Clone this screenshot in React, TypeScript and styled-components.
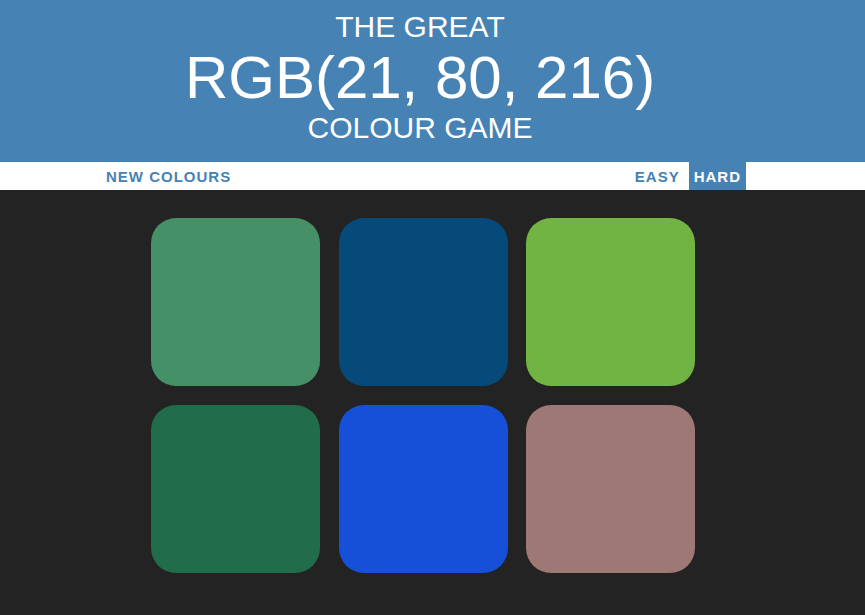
import React from "react";
import styled, { createGlobalStyle } from "styled-components";

const Global = createGlobalStyle`
  html, body { margin: 0; padding: 0; background: #232323; }
  body { font-family: "Liberation Sans", Arial, sans-serif; }
  * { box-sizing: border-box; }
`;

const Page = styled.div`
  min-height: 100vh;
  background: #232323;
`;

const Header = styled.header`
  background: #4682b4;
  color: #fff;
  text-align: center;
  padding: 10px 25px 17px 0;
  font-weight: 400;
  text-transform: uppercase;
`;

const Line = styled.div<{ $size: number; $lh: number }>`
  font-size: ${(p) => p.$size}px;
  line-height: ${(p) => p.$lh}px;
`;

const Stripe = styled.nav`
  background: #fff;
  height: 28px;
  padding-right: 13px;
`;

const StripeInner = styled.div`
  width: 640px;
  height: 100%;
  margin: 0 auto;
  display: flex;
  justify-content: space-between;
  align-items: stretch;
`;

const Group = styled.div`
  display: flex;
  gap: 4px;
`;

const Btn = styled.button<{ $selected?: boolean; $pad?: boolean }>`
  border: none;
  background: ${(p) => (p.$selected ? "#4682b4" : "none")};
  color: ${(p) => (p.$selected ? "#fff" : "#4682b4")};
  font-family: "Liberation Sans", Arial, sans-serif;
  font-weight: 700;
  font-size: 15px;
  letter-spacing: 1px;
  text-transform: uppercase;
  height: 100%;
  padding: ${(p) => (p.$pad ? "0 5px" : "0")};
  cursor: pointer;
  outline: none;
`;

const Board = styled.main`
  padding: 28px 19px 0 0;
  display: flex;
  justify-content: center;
`;

const Grid = styled.div`
  display: grid;
  grid-template-columns: repeat(3, 169px);
  grid-auto-rows: 168px;
  column-gap: 18.5px;
  row-gap: 19px;
`;

const Square = styled.div<{ $color: string }>`
  background: ${(p) => p.$color};
  border-radius: 25px;
`;

const colors = [
  "#459066",
  "#064a7a",
  "#72b443",
  "#216c4b",
  "#1750d8",
  "#9e7875",
];

export default function App() {
  return (
    <Page>
      <Global />
      <Header>
        <Line $size={30} $lh={34}>The Great</Line>
        <Line $size={60} $lh={67}>RGB(21, 80, 216)</Line>
        <Line $size={30} $lh={34}>Colour Game</Line>
      </Header>
      <Stripe>
        <StripeInner>
          <Btn>New Colours</Btn>
          <Group>
            <Btn $pad>Easy</Btn>
            <Btn $pad $selected>Hard</Btn>
          </Group>
        </StripeInner>
      </Stripe>
      <Board>
        <Grid>
          {colors.map((c, i) => (
            <Square key={i} $color={c} />
          ))}
        </Grid>
      </Board>
    </Page>
  );
}
